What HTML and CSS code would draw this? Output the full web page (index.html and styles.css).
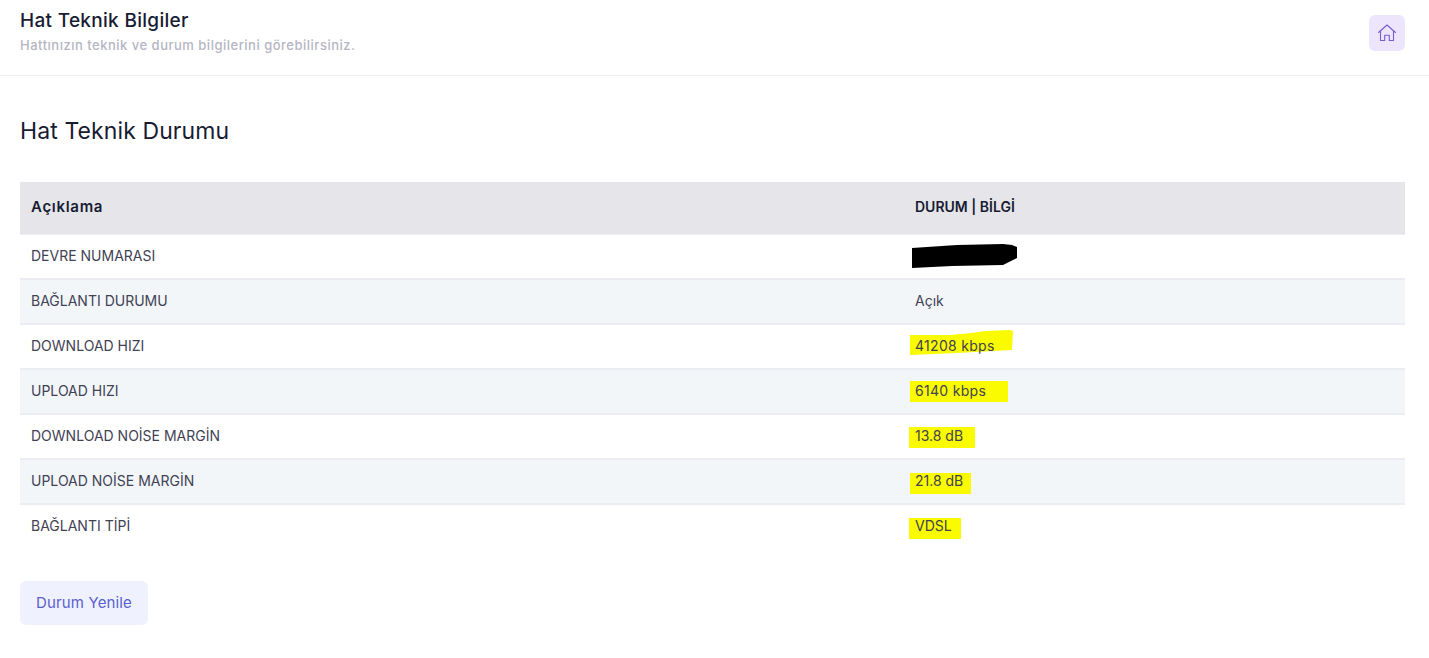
FILE: index.html
```html
<!DOCTYPE html>
<html lang="tr">
<head>
<meta charset="utf-8">
<title>Hat Teknik Bilgiler</title>
<link rel="stylesheet" href="styles.css">
</head>
<body>
<header class="topbar">
  <div class="topbar-text">
    <h1 class="page-title">Hat Teknik Bilgiler</h1>
    <p class="page-sub">Hattınızın teknik ve durum bilgilerini görebilirsiniz.</p>
  </div>
  <a class="home-btn" href="#" aria-label="Ana sayfa">
    <svg class="home-icon" viewBox="0 0 20 20" fill="none" stroke="#7a5ccf" stroke-width="1.1" stroke-linejoin="round" stroke-linecap="round">
      <path d="M1.5 9.5 10 2l8.5 7.5"/>
      <path d="M3.5 8v9.5h4.2v-5.2h4.6v5.2h4.2V8"/>
    </svg>
  </a>
</header>
<main class="content">
  <h2 class="section-title">Hat Teknik Durumu</h2>
  <table class="status-table">
    <thead>
      <tr><th class="col-a">Açıklama</th><th class="col-b">DURUM | BİLGİ</th></tr>
    </thead>
    <tbody>
      <tr><td>DEVRE NUMARASI</td><td class="val"><svg class="mark mark-black" viewBox="0 0 106 26"><path d="M0 4 45 1 91 0 100 1 105 3 105 14 91 21 40 22 0 24Z" fill="#000"/></svg></td></tr>
      <tr><td>BAĞLANTI DURUMU</td><td class="val">Açık</td></tr>
      <tr><td>DOWNLOAD HIZI</td><td class="val"><svg class="mark mark-1" viewBox="0 0 104 27"><path d="M0 6 40 6 62 4 75 2 100 1 103 2 102 21 47 24 0 26Z" fill="#fafa00"/></svg><span class="val-text wide">41208 kbps</span></td></tr>
      <tr><td>UPLOAD HIZI</td><td class="val"><span class="mark mark-2"></span><span class="val-text wide">6140 kbps</span></td></tr>
      <tr><td>DOWNLOAD NOİSE MARGİN</td><td class="val"><span class="mark mark-3"></span><span class="val-text">13.8 dB</span></td></tr>
      <tr><td>UPLOAD NOİSE MARGİN</td><td class="val"><span class="mark mark-4"></span><span class="val-text">21.8 dB</span></td></tr>
      <tr><td>BAĞLANTI TİPİ</td><td class="val"><span class="mark mark-5"></span><span class="val-text">VDSL</span></td></tr>
    </tbody>
  </table>
  <button class="refresh-btn" type="button">Durum Yenile</button>
</main>
</body>
</html>
```
FILE: styles.css
```css
* { box-sizing: border-box; }
html, body { margin: 0; padding: 0; background: #fff; }
body {
  font-family: "Inter", "Noto Sans", "Liberation Sans", sans-serif;
  color: #3f4254;
  height: 658px;
  overflow: hidden;
}
.topbar {
  height: 76px;
  border-bottom: 1px solid #eceef2;
  padding: 15px 24px 0 20px;
  display: flex;
  justify-content: space-between;
  align-items: flex-start;
}
.page-title {
  margin: -8px 0 0;
  font-size: 19px;
  line-height: 27px;
  font-weight: 500;
  letter-spacing: 0.3px;
  color: #181c32;
}
.page-sub {
  margin: 2px 0 0;
  font-size: 13px;
  line-height: 19px;
  font-weight: 500;
  letter-spacing: 0.5px;
  color: #b5b5c3;
}
.home-btn {
  width: 36px;
  height: 36px;
  border-radius: 6px;
  background: #ece5fc;
  display: flex;
  align-items: center;
  justify-content: center;
}
.home-icon { width: 20px; height: 20px; display: block; }
.content { padding: 39px 24px 0 20px; }
.section-title {
  margin: 0;
  font-size: 23px;
  line-height: 32px;
  font-weight: 400;
  letter-spacing: 0.1px;
  color: #181c32;
}
.status-table {
  width: 100%;
  margin-top: 35px;
  border-collapse: collapse;
  table-layout: fixed;
  font-size: 14px;
}
.status-table th {
  height: 52px;
  padding: 0 11px 2px;
  background: #e5e5ea;
  border-bottom: 1px solid #eceef3;
  text-align: left;
  font-weight: 600;
  color: #181c32;
}
.col-a { width: 884px; font-size: 15px; letter-spacing: 0.7px; }
.status-table td {
  height: 45px;
  padding: 0 11px 2px;
  border-bottom: 2px solid #ebedf3;
  color: #3f4254;
}
.status-table tbody tr:nth-child(even) td { background: #f3f6f9; }
.status-table tbody tr:last-child td { border-bottom: 0; padding-bottom: 4px; }
.val { position: relative; }
.val-text { position: relative; }
.wide { letter-spacing: 0.3px; }
.mark { position: absolute; display: block; background: #fafa00; }
svg.mark { background: none; }
.mark-black { left: 8px; top: 9px; width: 106px; height: 26px; }
.mark-1 { left: 6px; top: 4px; width: 104px; height: 27px; }
.mark-2 { left: 6px; top: 11px; width: 98px; height: 21px; }
.mark-3 { left: 5px; top: 12px; width: 66px; height: 21px; }
.mark-4 { left: 6px; top: 13px; width: 61px; height: 21px; }
.mark-5 { left: 5px; top: 13px; width: 52px; height: 21px; }
.refresh-btn {
  display: block;
  margin-top: 32px;
  width: 128px;
  height: 44px;
  padding: 0 0 2px;
  border: 0;
  border-radius: 6px;
  background: #eff1fe;
  color: #5a5fcf;
  font-family: inherit;
  font-size: 15px;
  letter-spacing: 0.15px;
}
```
